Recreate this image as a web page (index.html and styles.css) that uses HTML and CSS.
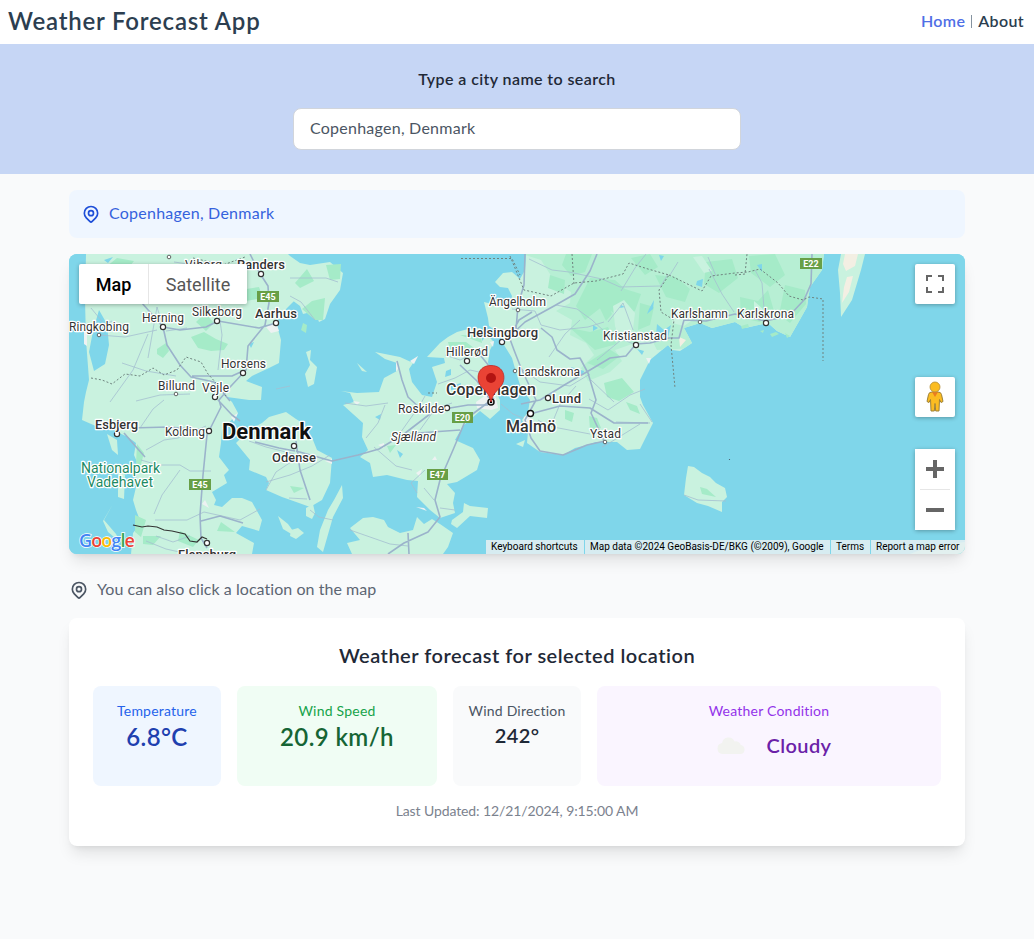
FILE: index.html
```html
<!DOCTYPE html>
<html lang="en">
<head>
<meta charset="utf-8">
<title>Weather Forecast App</title>
<link rel="stylesheet" href="styles.css">
</head>
<body>
<header class="topbar">
  <h1 class="brand">Weather Forecast App</h1>
  <nav class="nav"><a class="nav-link active">Home</a><span class="sep"></span><a class="nav-link">About</a></nav>
</header>
<section class="search">
  <label class="search-label" for="city"><span>Type a city name to search</span></label>
  <input class="search-input" id="city" type="text" value="Copenhagen, Denmark">
</section>
<main class="content">
  <div class="place">
    <svg class="pin" viewBox="0 0 24 24"><path d="M17.657 16.657L13.414 20.9a2 2 0 0 1-2.827 0l-4.244-4.243a8 8 0 1 1 11.314 0z"/><path d="M15 11a3 3 0 1 1-6 0 3 3 0 0 1 6 0z"/></svg>
    <span class="place-name">Copenhagen, Denmark</span>
  </div>
  <div class="map">
    <svg class="map-canvas" viewBox="69 254 896 300">
      <defs>
        <path id="skane" d="M526 254L525 270L520 279L512 272L503 273L495 282L500 287L508 288L512 296L510 304L500 306L484 302L488 318L489 326L498 332L504 345L512 358L516 372L520 385L530 400L528 412L522 420L528 432L527 443L540 452L563 455L575 448L587 445L596 442L617 442L627 450L640 449L653 423L643 405L640 397L640 380L650 360L668 345L672 350L680 351L692 343L684 328L700 323L712 328L735 322L745 328L768 323L777 331L790 337L798 323L807 307L810 287L822 270L824 254Z"/>
        <clipPath id="swe"><use href="#skane"/></clipPath>
      </defs>
      <rect class="water" x="69" y="254" width="896" height="300"/>
      <g class="land">
        <use href="#skane"/>
        <path d="M86 254L85 300L86 340L89 380L86 392L84 402L82 420L98 427L108 424L119 433L128 437L136 443L134 455L137 462L136 487L133 500L136 510L141 523L133 533L131 554H252L254 543L236 533L242 526L259 531L262 520L252 502L242 498L232 498L222 507L214 505L216 500L212 492L227 483L224 475L229 470L219 457L221 443L222 430L238 413L232 402L227 397L249 400L261 400L262 387L246 381L252 376L269 368L279 363L281 340L276 322L287 308L299 296L292 300L300 306L303 314L315 311L319 322L325 319L330 304L340 290L343 273L330 262L310 265L300 263L290 256L288 254Z"/>
        <path d="M236 443L249 430L262 423L269 417L286 412L296 419L304 424L313 440L317 450L332 458L330 483L322 500L310 507L299 503L282 497L266 490L269 483L266 477L249 470L250 460Z"/>
        <path d="M342 485L343 498L333 517L323 552L317 547L320 530L328 510L334 500Z"/>
        <path d="M306 508L313 504L315 513L312 519L306 516Z"/><path d="M291 530L298 528L304 533L296 539L290 536Z"/>
        <path d="M278 516L288 524L298 538L283 529Z"/><path d="M107 434L117 440L118 455L112 450Z"/><path d="M118 466L125 475L124 499L118 497Z"/><path d="M113 504L104 520L116 534L120 542L108 532L103 521Z"/>
        <path d="M427 357L440 343L448 337L457 332L468 329L480 328L494 342L490 350L488 362L492 378L495 390L500 400L500 410L490 419L480 411L463 426L455 440L473 448L480 460L477 470L457 482L447 484L455 493L453 503L455 513L440 518L430 510L417 497L418 481L407 480L387 475L373 477L370 463L360 457L368 450L362 437L363 423L343 405L354 402L350 393L341 391L357 393L379 392L384 378L397 371L397 363L385 359L375 352L400 357L411 362L418 356L409 369L412 382L422 395L432 397L437 382L432 367L445 363L444 358Z"/>
        <path d="M452 520L463 512L464 503L470 506L488 508L487 518L470 516L457 528L451 524Z"/>
        <path d="M350 528L363 518L373 517L384 520L388 527L400 533L413 530L417 517L424 524L432 519L440 524L453 533L448 547L443 554H352L347 543L360 540Z"/>
        <path d="M306 352L311 350L310 360L317 367L314 384L308 387L305 374L310 365Z"/><path d="M357 363L367 372L362 371Z"/>
        <path d="M841 254L838 270L840 293L841 317L852 300L861 270L865 254Z"/>
        <path d="M688 466L694 467L702 473L710 477L716 483L725 488L727 497L722 502L722 512L708 506L697 503L684 495L686 478Z"/>
        <path d="M516 444L525 440L523 447Z"/><path d="M910 554L928 547L965 542V554Z"/>
      </g>
      <path class="forest" d="M303 323L307 325L306 333L301 330ZM157 349L166 343L169 351L163 358L157 354ZM191 337L204 332L216 339L228 344L224 350L211 351L198 348ZM196 322L205 313L214 323L206 331ZM302 309L312 301L325 298L323 320L315 320ZM326 265L341 264L340 279L330 280ZM295 283L307 269L314 281L300 288ZM240 290L259 287L263 298L246 301ZM101 271L117 258L134 261L122 276ZM137 444L144 453L140 468L136 463ZM135 515L146 520L141 537L135 532ZM221 522L235 532L217 531ZM290 486L304 488L294 493ZM387 446L396 445L390 453ZM448 342L466 342L474 348L464 352L450 350ZM460 335L481 336L482 343ZM485 530L489 532ZM700 487L707 489L716 497L702 494ZM143 536L161 536L153 545L143 544ZM180 531L199 540L193 547L178 541Z"/>
      <g clip-path="url(#swe)">
        <path class="wood" d="M522 254L541 260L555 282L571 292L570 303L556 311L572 320L570 335L586 343L594 355L581 368L588 381L610 372L622 361L615 350L635 343L650 336L657 350L696 348L690 329L735 330L795 340L830 254Z"/>
        <path class="forest" d="M565 410L574 413L572 422L565 419ZM626 402L637 406L640 414L630 410ZM589 416L597 418L601 428L590 430ZM566 254L592 254L585 272L571 276L562 265ZM550 275L565 280L564 294L548 288ZM590 278L615 280L625 289L641 294L635 311L617 315L603 306L585 320L576 306ZM570 328L590 332L608 327L617 344L595 350ZM596 300L603 292L612 314L606 321ZM631 258L650 254L658 267L645 275ZM655 275L676 277L690 289L685 302L666 297ZM706 262L732 259L738 278L719 293L704 284ZM749 256L775 254L785 275L770 287L751 273ZM740 297L758 301L768 290L774 311L760 322L741 318ZM785 285L805 290L806 304L790 323L779 315ZM640 303L654 307L650 325L638 330ZM587 363L609 349L620 356L603 369ZM604 383L622 378L634 392L619 401L607 397Z"/>
        <path class="light" d="M613 306L624 300L635 313L632 337L620 342L615 326ZM673 310L682 309L694 319L684 326L672 323ZM754 301L764 310L774 319L754 320ZM693 257L702 256L712 271L704 273Z"/>
      </g>
      <path class="forest" d="M741 326L748 324L749 327L742 329ZM760 331L764 330L763 333ZM770 334L776 332L779 334L772 337ZM785 333L790 336L787 338Z"/>
      <path class="lake" d="M99 310L107 324L109 345L105 364L94 371L89 352L93 331ZM649 309L654 300L653 309L647 314ZM657 324L664 330L671 325L668 338L656 335ZM697 281L703 279L702 287L696 285ZM593 325L598 328L593 331ZM621 305L625 307L620 308ZM659 255L664 256L661 261ZM757 265L762 264L762 272ZM637 349L644 351L642 355ZM571 367L584 371L583 375L572 373ZM446 371L451 369L451 375L445 377ZM451 386L461 383L460 389L451 390ZM375 417L381 414L380 420ZM249 344L254 342L251 348ZM397 450L403 454L400 458ZM482 334L488 334L482 341ZM104 260L113 257L108 263Z"/>
      <path class="sand" d="M845 254L858 254L855 266L846 271L843 264ZM847 277L853 276L849 292L842 303L844 287ZM679 337L686 340L680 347Z"/>
      <path class="town" d="M266 327L276 322L279 331L271 333ZM231 417L238 413L234 422ZM84 330L87 331L87 346L84 344ZM476 402L489 393L496 398L498 408L491 410L477 408ZM524 417L531 413L530 423L523 426ZM396 361L399 367L396 372ZM410 361L418 356L414 364ZM490 342L494 341L493 347ZM325 461L332 459L332 464ZM416 473L422 469L420 477ZM416 507L424 508L427 511ZM378 445L384 443L384 448ZM353 401L360 402L357 405ZM432 460L435 456L437 460ZM646 358L651 358L649 364ZM205 500L209 508L202 504Z"/>
      <g class="roads minor">
        <path d="M99 335L125 337L157 330M91 308L105 325L112 321M110 402L133 370L148 334M122 363L146 371L176 376M148 358L157 307L163 327M166 331L187 328M136 401L160 395L190 394M140 428L153 409L164 400M146 450L164 440L178 438L206 426M141 460L158 465L180 465L190 471L211 471M180 470L162 495L154 514M155 520H187L204 512L240 520L260 509M146 541L166 549L184 553M156 536L173 542L190 536M218 370L222 335L218 306M174 262L203 266L220 300M290 278L326 278L338 282M290 296L301 302L315 320M276 389L290 386"/>
        <path d="M249 441L266 447L294 454M266 482L290 475L312 466L330 455M294 460L276 472L266 490M289 498L307 499M310 510L319 517L333 520M350 530L370 537L390 544L408 546M374 447L396 466L412 470M385 405L378 423L366 438M398 436L420 405L425 396M420 430L435 409L452 403M417 493L411 483L425 470M440 508L455 510M438 384L455 378L470 370L488 374M445 355L460 360L477 352M684 495L698 500L726 501M424 488L434 500M345 403L366 406L388 403"/>
        <path d="M529 259L552 270L569 272L602 279L620 287L661 286L668 274M512 309L535 311L541 325L560 330L588 327L604 322M549 357L565 334L580 320M556 305L577 309L592 320L605 332L636 345M608 322L623 303L633 330M597 360L627 335M591 380L614 402M589 399L608 410L630 395L645 389M621 291L635 268L646 254M670 275L678 262M709 269L722 294L734 312M765 321L762 283L755 270M708 257L716 276M538 420L548 426L590 434M548 433L560 404L576 386M640 424L611 442L602 447M640 404L652 422M520 368L540 382L570 386L590 374M616 422L650 423M513 432L528 426M501 404L513 414L523 418"/>
      </g>
      <g class="roads">
        <path d="M142 303L163 327L167 345L180 365L191 377L214 382L230 401M163 327L180 330L206 327L218 321L259 328L276 323M250 254L259 272L268 286L269 303L265 325L248 346L246 370L231 386L219 400L221 407L207 435L203 475L200 515L201 538L207 548M192 376H232L245 370M218 400L232 415L240 421M131 428L168 427L204 430M124 433L137 448L145 457M296 441L300 470L310 500M296 451L332 461L358 455L379 449L404 434L460 430M404 434L430 414M255 442L279 448L295 451M494 398L466 419L453 450L440 480L435 500L440 517L428 532L404 543L388 554M408 533L409 554M201 521L220 516L243 523M397 361L402 380L408 397L422 410"/>
        <path d="M525 254L524 285L518 305L516 330M597 254L590 271L575 294L554 306L525 322L510 336L519 320L532 312M507 331L514 350L521 368L536 400L525 420L531 438L540 451L563 455L587 445L605 441M541 328L552 337L557 350L570 359L580 358L588 373L596 400L591 413L604 441M521 404L540 400L566 384L590 370L610 358L626 356L636 344L650 343L669 338L679 338L684 320L706 321L735 314L765 321L789 316L804 300L811 284L812 254M530 414L560 406L590 408L614 423L648 423M476 350L494 372M460 365L477 381L489 398M488 405L468 405L450 408"/>
      </g>
      <path class="border" d="M91 378L102 380L112 384L125 374L140 376L153 368L164 375L177 370L186 357L201 362L208 374L217 384L226 396M193 258L223 265L245 257M510 256L524 290L551 296L574 283L596 281L623 274L629 263L648 269L669 275L659 290L661 312L674 320L671 345M669 275L702 291L711 276L735 273L748 272L760 269L778 283L789 296L803 300L809 297L823 299V361M671 345L675 388M572 254L574 284M735 275L745 274L747 254M428 393L437 393M461 258.500H512L520 275"/>
      <path class="frontier" d="M133 525L142 527L148 526L157 527L164 530L172 531L185 534L190 541L197 542L202 537L207 539"/>
      <g class="shields">
        <rect x="257" y="291" width="22" height="11"/><rect x="189" y="479" width="22" height="11"/><rect x="452" y="412" width="21" height="11"/><rect x="427" y="469" width="21" height="11"/><rect x="800" y="258" width="22" height="11"/>
        <text x="268" y="300">E45</text><text x="200" y="488">E45</text><text x="462.500" y="421">E20</text><text x="437.500" y="478">E47</text><text x="811" y="267">E22</text>
      </g>
      <g class="dots">
        <circle cx="261" cy="274" r="2.600"/><circle cx="163" cy="327" r="2.600"/><circle cx="217" cy="321" r="2.600"/><circle cx="276" cy="323" r="2.600"/><circle class="sm" cx="99" cy="335" r="1.800"/><circle cx="243" cy="373" r="2.600"/><circle class="sm" cx="176" cy="394" r="1.800"/><circle cx="215" cy="397" r="2.600"/><circle cx="117" cy="434" r="2.600"/><circle cx="209" cy="431" r="2.600"/><circle cx="294" cy="446" r="2.600"/><circle cx="207" cy="543" r="2.600"/><circle class="sm" cx="169" cy="257" r="1.800"/><circle class="sm" cx="518" cy="310" r="1.800"/><circle cx="502" cy="342" r="2.600"/><circle cx="467" cy="361" r="2.600"/><circle class="sm" cx="515" cy="371" r="1.800"/><circle cx="548" cy="398" r="2.600"/><circle class="big" cx="530.500" cy="413.500" r="3"/><circle cx="447" cy="408" r="2.600"/><circle class="sm" cx="605" cy="442" r="1.800"/><circle cx="636" cy="345" r="2.600"/><circle class="sm" cx="700" cy="322" r="1.800"/><circle cx="766" cy="323" r="2.600"/>
      </g>
      <g class="labels">
        <text x="185" y="269" textLength="37">Viborg</text><text class="md" x="237" y="269" textLength="48">Randers</text><text x="142" y="321.500" textLength="42">Herning</text><text x="192" y="315.500" textLength="50">Silkeborg</text><text class="md" x="255" y="318" textLength="42">Aarhus</text><text x="69" y="330.500" textLength="60">Ringkobing</text><text x="221" y="367.500" textLength="45">Horsens</text><text x="158" y="389.500" textLength="37">Billund</text><text x="202" y="391.500" textLength="27">Vejle</text><text class="md" x="95" y="429" textLength="43">Esbjerg</text><text x="165" y="435.500" textLength="40">Kolding</text><text class="md" x="272" y="462" textLength="44">Odense</text><text class="md" x="178" y="558.500" textLength="58">Flensburg</text>
        <text class="country" x="222" y="439" textLength="89">Denmark</text><text class="park" x="81" y="473" textLength="79">Nationalpark</text><text class="park" x="87" y="487" textLength="66">Vadehavet</text>
        <text x="489" y="305.500" textLength="57">Ängelholm</text><text class="md" x="467" y="336.500" textLength="71">Helsingborg</text><text x="446" y="355.500" textLength="42">Hillerød</text><text x="518" y="375.500" textLength="62">Landskrona</text><text class="lg" x="446" y="395" textLength="90">Copenhagen</text><text class="md" x="552" y="402.500" textLength="29">Lund</text><text x="398" y="412.500" textLength="46">Roskilde</text><text class="it" x="391" y="441" textLength="45">Sjælland</text><text class="lg" x="506" y="431.500" textLength="50">Malmö</text><text x="590" y="437.500" textLength="31">Ystad</text><text x="603" y="339.500" textLength="64">Kristianstad</text><text x="671" y="317.500" textLength="57">Karlshamn</text><text x="737" y="317.500" textLength="57">Karlskrona</text>
      </g>
      <circle cx="491" cy="402" r="3" fill="#fff" stroke="#111" stroke-width="1.500"/><circle cx="491" cy="402" r="1.300"/>
      <path d="M491 402C489.500 394 485 391 480.500 385.500C475.500 378 478 365.500 491 365.500S506.500 378 501.500 385.500C497 391 492.500 394 491 402Z" fill="#ea4335" stroke="#c5221f" stroke-width=".8"/><circle cx="491" cy="378" r="5" fill="#b31412"/>
      <circle cx="729.500" cy="459.500" r=".6" fill="#456"/>
    </svg>
    <div class="map-type"><button class="type on">Map</button><button class="type">Satellite</button></div>
    <button class="ctl full"><svg viewBox="0 0 18 18"><path d="M0 0v6h2V2h4V0zM12 0v2h4v4h2V0zM16 12v4h-4v2h6v-6zM2 12H0v6h6v-2H2z" fill="#666"/></svg></button>
    <button class="ctl pegman"><svg viewBox="0 0 20 32"><path d="M3.500 13.500Q4 11 7 11H13Q16 11 16.500 13.500L18 20.500L16 21.500L14.500 18.500L14 30H10.700L10 22.500L9.300 30H6L5.500 18.500L4 21.500L2 20.500Z" fill="#fbbc21" stroke="#9d8138" stroke-width="1"/><path d="M7 11H13L10 16Z" fill="#ea7d20"/><circle cx="10" cy="6" r="5" fill="#fbbc21" stroke="#b38c36" stroke-width=".8"/></svg></button>
    <div class="zoom"><button class="zbtn"><svg viewBox="0 0 18 18"><path d="M7 0h4v7h7v4h-7v7H7v-7H0V7h7z" fill="#666"/></svg></button><span class="zline"></span><button class="zbtn"><svg viewBox="0 0 18 18"><path d="M0 7h18v4H0z" fill="#666"/></svg></button></div>
    <div class="logo"><span class="b">G</span><span class="r">o</span><span class="y">o</span><span class="b">g</span><span class="g">l</span><span class="r">e</span></div>
    <div class="credits"><span class="c1">Keyboard shortcuts</span><span class="c2">Map data ©2024 GeoBasis-DE/BKG (©2009), Google</span><span class="c3">Terms</span><span class="c4">Report a map error</span></div>
  </div>
  <div class="hint">
    <svg class="pin" viewBox="0 0 24 24"><path d="M17.657 16.657L13.414 20.900a2 2 0 0 1-2.827 0l-4.244-4.243a8 8 0 1 1 11.314 0z"/><path d="M15 11a3 3 0 1 1-6 0 3 3 0 0 1 6 0z"/></svg>
    <span class="hint-text">You can also click a location on the map</span>
  </div>
  <section class="card">
    <h2 class="card-title"><span>Weather forecast for selected location</span></h2>
    <div class="tiles">
      <div class="tile temp"><p class="name">Temperature</p><p class="value">6.8°C</p></div>
      <div class="tile wind"><p class="name">Wind Speed</p><p class="value">20.9 km/h</p></div>
      <div class="tile dir"><p class="name">Wind Direction</p><p class="value small">242°</p></div>
      <div class="tile cond"><p class="name">Weather Condition</p>
        <div class="sky"><svg class="cloud" viewBox="0 0 48 48"><path d="M15.500 33a5.500 5.500 0 0 1-.4-10.900a6.500 6.500 0 0 1 12.400-1.600a5 5 0 0 1 6.300 3.500a4.600 4.600 0 0 1 .2 9z" fill="#f2f3f0"/></svg><span class="value small">Cloudy</span></div></div>
    </div>
    <p class="updated">Last Updated: 12/21/2024, 9:15:00 AM</p>
  </section>
</main>
</body>
</html>
```
FILE: styles.css
```css
*{box-sizing:border-box}
body{margin:0;min-height:939px;background:#f9fafb;font-family:Lato,"Open Sans",sans-serif;font-size:16px;line-height:24px;color:#2c3e50}
h1,h2,p{margin:0}
button{border:0;padding:0;background:#fff;display:flex;align-items:center;justify-content:center}
.topbar{height:44px;background:#fff;display:flex;align-items:center;justify-content:space-between;padding:0 10px 2px 8px}
.brand{font-size:24px;line-height:32px;font-weight:600;letter-spacing:.8px}
.nav{display:flex;align-items:center;gap:5px;font-weight:600;letter-spacing:.35px}
.nav-link.active{color:#4f6fe6}
.sep{width:1px;height:13px;margin:0 1px;background:#8593a0}
.search{height:130px;background:#c6d6f5;padding:23px 24px 24px;display:flex;flex-direction:column;align-items:center;gap:17px}
.search-label{font-weight:600;letter-spacing:.4px;color:#1f2937}
.search-input{width:448px;height:42px;border:1px solid #d1d5db;border-radius:8px;padding:0 16px 4px;background:#fff;font:400 16px/24px Lato,sans-serif;letter-spacing:.25px;color:#4b5563}
.content{width:896px;margin:0 auto;padding-top:16px}
.place{height:48px;border-radius:8px;background:#eff6ff;color:#1d4ed8;padding:0 12px;display:flex;align-items:center;gap:8px}
.place-name{letter-spacing:.25px;padding-bottom:2px;color:#3562dd}
.pin{width:20px;height:20px;fill:none;stroke:currentColor;stroke-width:2;stroke-linejoin:round}
.map{position:relative;height:300px;margin-top:16px;border-radius:8px;overflow:hidden;background:#7fd6ea}
.map-canvas{display:block;width:896px;height:300px}
.map,.card{box-shadow:0 10px 15px -3px rgba(0,0,0,.1),0 4px 6px -4px rgba(0,0,0,.1)}
.water,.lake{fill:#7fd6ea}
.land{fill:#c9f2df}
.wood{fill:#b7efd4}.forest{fill:#a5ebc8}.light{fill:#c9f2df}.sand{fill:#f3efe3}.town{fill:#edf2f2}
.roads{fill:none;stroke:#9bb3cb;stroke-width:1.600;stroke-linejoin:round}
.minor{stroke:#a5bfd0;stroke-width:.8}
.border{fill:none;stroke:#6f837f;stroke-width:1;stroke-dasharray:2 2}
.frontier{fill:none;stroke:#333;stroke-width:1.200}
.shields rect{fill:#689f46}
.shields text{fill:#fff;font:700 9px Roboto,sans-serif;text-anchor:middle}
.dots circle{fill:#fff;stroke:#333;stroke-width:1.200}
.dots .sm{stroke:#555;stroke-width:.9}
.dots .big{stroke:#111;stroke-width:1.400}
.labels text{font:400 12px Roboto,sans-serif;fill:#333;stroke:#fff;stroke-width:2.500px;stroke-linejoin:round;paint-order:stroke}
.labels .md{font-size:13px;font-weight:500;fill:#333}
.labels .lg{font-size:16px;font-weight:500;fill:#333}
.labels .country{font-size:22px;font-weight:700;fill:#111}
.labels .park{font-size:14px;fill:#1c8a63}
.labels .it{font-style:italic}
.map-type{position:absolute;left:10px;top:10px;display:flex;height:40px;border-radius:2px;overflow:hidden;box-shadow:0 1px 4px rgba(0,0,0,.3)}
.type{width:99px;font:400 18px Roboto,sans-serif;color:#565656;border-left:1px solid #e6e6e6}
.type.on{width:69px;color:#000;font-weight:500;border:0}
.ctl,.zoom{position:absolute;right:10px;width:40px;height:40px;border-radius:2px;box-shadow:0 1px 4px rgba(0,0,0,.3);background:#fff}
.full{top:10px}.full svg,.zbtn svg{width:18px;height:18px}
.pegman{top:123px}.pegman svg{width:20px;height:32px}
.zoom{top:195px;height:81px}
.zbtn{width:40px;height:40px}
.zline{display:block;height:1px;width:30px;margin:0 5px;background:#e6e6e6}
.logo{position:absolute;left:10px;top:274px;font:600 18px/24px "Open Sans",sans-serif;letter-spacing:-.9px;-webkit-text-stroke:1.500px #fff;paint-order:stroke fill}
.b{color:#4285f4}.r{color:#ea4335}.y{color:#fbbc04}.g{color:#34a853}
.credits{position:absolute;right:0;bottom:0;height:14px;display:flex;gap:1px;font:400 10px/14px Roboto,sans-serif;color:#000;white-space:nowrap}
.credits span{background:rgba(230,240,242,.85);padding-left:5px}
.c1{width:98px}.c2{width:245px}.c3{width:39px}.c4{width:94px}
.hint{margin-top:24px;display:flex;align-items:center;gap:8px;height:24px;color:#4b5563}
.hint-text{letter-spacing:.05px;padding-bottom:2px;color:#5d6673}
.card{height:228px;margin-top:16px;padding:23px 24px 24px;border-radius:8px;background:#fff;text-align:center}
.card-title{font-size:20px;line-height:28px;font-weight:600;color:#1f2937;letter-spacing:.5px}
.tiles{display:grid;grid-template-columns:128px 200px 128px 344px;gap:16px;height:100px;margin:17px 0 15px}
.tile{border-radius:8px;padding:15px 0}
.name{font-size:14px;line-height:20px;font-weight:400;letter-spacing:.22px}
.value{font-size:24px;line-height:32px;font-weight:600;letter-spacing:.4px}
.value.small{font-size:20px;line-height:28px}
.temp{background:#eff6ff;color:#2563eb}.temp .value{color:#1e40af}
.wind{background:#f0fdf4;color:#16a34a}.wind .value{color:#166534}
.dir{background:#f9fafb;color:#4b5563}.dir .value{color:#1f2937}
.cond{background:#faf5ff;color:#9333ea}.cond .value{color:#6b21a8}
.sky{display:flex;height:48px;align-items:center;justify-content:center;gap:12px}
.cloud{width:48px;height:48px}
.updated{font-size:14px;line-height:20px;color:#7b828e;letter-spacing:-.1px}
```
